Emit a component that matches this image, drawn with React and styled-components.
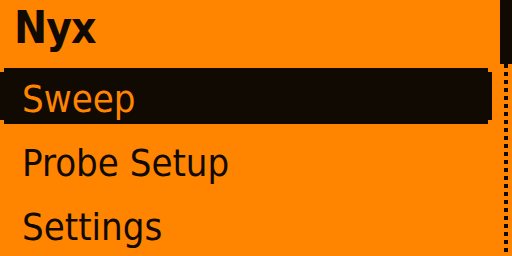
import React from "react";
import styled, { createGlobalStyle } from "styled-components";

const ORANGE = "#ff8400";
const INK = "#110a02";

const GlobalStyle = createGlobalStyle`
  html, body {
    margin: 0;
    padding: 0;
    background: ${ORANGE};
  }
  body {
    font-family: "DejaVu Sans Condensed", "DejaVu Sans", sans-serif;
    font-stretch: condensed;
  }
`;

const items = ["Sweep", "Probe Setup", "Settings"];

function App() {
  const selected = 0;

  return (
    <>
      <GlobalStyle />
      <Screen>
        <Menu>
          <Title>Nyx</Title>
          <List>
            {items.map((label, i) => (
              <Item key={label} $active={i === selected}>
                {label}
              </Item>
            ))}
          </List>
        </Menu>
        <ScrollBar>
          <Thumb />
          <Track />
        </ScrollBar>
      </Screen>
    </>
  );
}

const Screen = styled.div`
  width: 512px;
  height: 256px;
  display: flex;
  background: ${ORANGE};
  color: ${INK};
  overflow: hidden;
`;

const Menu = styled.div`
  width: 492px;
  display: flex;
  flex-direction: column;
`;

const Title = styled.div`
  height: 64px;
  padding-left: 14px;
  box-sizing: border-box;
  font-weight: bold;
  font-size: 44px;
  line-height: 56px;
  letter-spacing: -1px;
`;

const List = styled.div`
  display: flex;
  flex-direction: column;
  gap: 8px;
  padding-top: 4px;
`;

const Item = styled.div`
  height: 56px;
  box-sizing: border-box;
  padding: 3px 0 0 22px;
  font-size: 38px;
  line-height: 56px;
  background: ${(p) => (p.$active ? INK : "transparent")};
  color: ${(p) => (p.$active ? ORANGE : INK)};
  clip-path: polygon(
    4px 0, calc(100% - 4px) 0, calc(100% - 4px) 4px, 100% 4px,
    100% calc(100% - 4px), calc(100% - 4px) calc(100% - 4px),
    calc(100% - 4px) 100%, 4px 100%, 4px calc(100% - 4px),
    0 calc(100% - 4px), 0 4px, 4px 4px
  );
`;

const ScrollBar = styled.div`
  margin-left: 8px;
  width: 12px;
  display: flex;
  flex-direction: column;
`;

const Thumb = styled.div`
  height: 64px;
  background: ${INK};
`;

const Track = styled.div`
  flex: 1;
  margin-left: 4px;
  width: 4px;
  background: repeating-linear-gradient(
    to bottom,
    ${INK} 0 4px,
    transparent 4px 8px
  );
`;

export default App;
